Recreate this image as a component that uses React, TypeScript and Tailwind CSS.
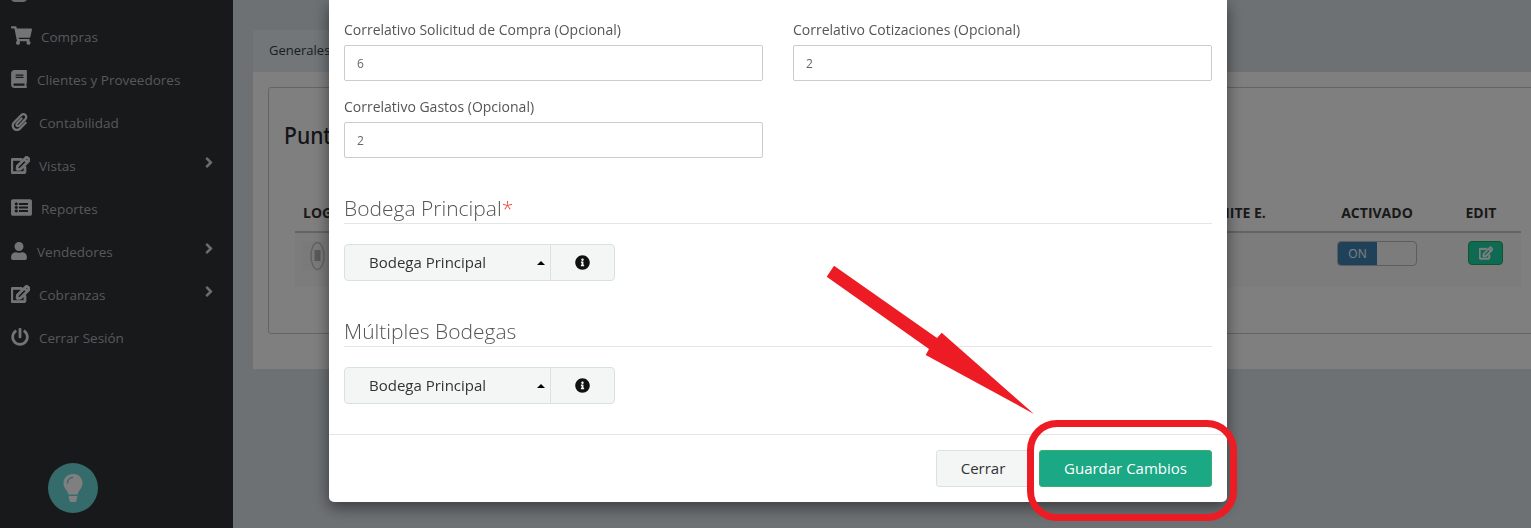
import React from "react";
import { FaShoppingCart, FaBook, FaPaperclip, FaRegEdit, FaListAlt, FaUser, FaPowerOff, FaInfoCircle, FaAngleRight } from "react-icons/fa";

const font = { fontFamily: '"Open Sans", sans-serif' };

const EditIcon = ({ className }: { className: string }) => <FaRegEdit className={className} stroke="currentColor" strokeWidth={36} />;

const items: { icon: React.ReactNode; label: string; gap: string; chevron?: boolean }[] = [
  { icon: <FaShoppingCart className="w-[21px] h-[19px]" />, label: "Compras", gap: "ml-[9px]" },
  { icon: <FaBook className="w-[16px] h-[18px]" />, label: "Clientes y Proveedores", gap: "ml-[10px]" },
  { icon: <FaPaperclip className="w-[17px] h-[18px]" />, label: "Contabilidad", gap: "ml-[11px]" },
  { icon: <EditIcon className="w-[19px] h-[18px]" />, label: "Vistas", gap: "ml-[9px]", chevron: true },
  { icon: <FaListAlt className="w-[21px] h-[19px] scale-x-110" />, label: "Reportes", gap: "ml-[9px]" },
  { icon: <FaUser className="w-[16px] h-[18px]" />, label: "Vendedores", gap: "ml-[10px]", chevron: true },
  { icon: <EditIcon className="w-[19px] h-[18px]" />, label: "Cobranzas", gap: "ml-[9px]", chevron: true },
  { icon: <FaPowerOff className="w-[18px] h-[18px]" />, label: "Cerrar Sesión", gap: "ml-[10px]" },
];

function Sidebar() {
  return (
    <aside className="w-[233px] shrink-0 bg-[#2f3236] text-[#b0b0b0] flex flex-col relative">
      <div className="-mt-[27px] h-[29px] pl-[11px] flex items-start">
        <div className="w-[16px] h-[29px] bg-[#d8d8d8] rounded-sm" />
      </div>
      <div className="pt-[13px]">
        {items.map((it) => (
          <div key={it.label} className="h-[43px] flex items-center pl-[11px] pr-[17px] text-[13.500px]">
            <span className="flex items-center -mt-[2px] text-[#e8e8e8]">{it.icon}</span>
            <span className={`${it.gap} mt-[1px]`}>{it.label}</span>
            {it.chevron && <FaAngleRight className="ml-auto w-[14px] h-[17px] -mt-[6px] text-[#d8d8d8]" />}
          </div>
        ))}
      </div>
      <div className="absolute left-[48px] top-[463px] w-[50px] h-[50px] rounded-full bg-[#6ad8d6] flex items-center justify-center">
        <svg width="22" height="30" viewBox="0 0 22 30">
          <path d="M11 1C5.500 1 1.500 5 1.500 10c0 3 1.200 5 2.800 7 1.200 1.500 1.900 3 2.100 4.500h9.200c.2-1.500.9-3 2.100-4.500 1.600-2 2.800-4 2.800-7 0-5-4-9-8.500-9z" fill="#fff" />
          <path d="M5.500 10c0-3 2.200-5.300 5-5.500" fill="none" stroke="#6ad8d6" strokeWidth="1.500" strokeLinecap="round" />
          <path d="M6.500 23h9l-1 4.500c-.3 1-1 1.500-2 1.500h-3c-1 0-1.700-.5-2-1.500z" fill="#fff" />
        </svg>
      </div>
    </aside>
  );
}

function Background() {
  return (
    <main className="flex-1 min-w-0 bg-[#dbe2e8] pl-[20px] pt-[30px] overflow-hidden">
      <div className="h-[42px] w-[120px] bg-[#e6edf2] rounded-tl flex items-center pl-[16px] text-[13px] text-[#2e3b47]">Generales</div>
      <div className="h-[297px] bg-white pl-[15px] pt-[15px]">
        <div className="h-[247px] w-[1300px] border border-[#c8c8c8] rounded-[3px] pl-[15px] pt-[31px]">
          <h2 className="text-[24px] leading-[32px] font-medium text-[#2a2a33]" style={{ fontFamily: '"Noto Sans", sans-serif', transform: "scaleX(.88)", transformOrigin: "left" }}>Punto de Venta</h2>
          <div className="w-[1226px] ml-[11px] mt-[49px]">
            <div className="h-[33px] flex items-center text-[14px] font-bold text-[#333] border-b-2 border-[#c8c8c8] pb-[7px]">
              <span className="w-[909px] pl-[8px]">LOGO</span>
              <span className="w-[108px]">LIMITE E.</span>
              <span className="w-[130px] text-center">ACTIVADO</span>
              <span className="w-[78px] text-center">EDIT</span>
            </div>
            <div className="h-[54px] bg-[#f9f9f9] flex items-start pt-[8px] pl-[8px]">
              <div className="w-[22px] h-[30px] bg-[#f4f4f4] flex items-center justify-end">
                <svg width="15" height="30" viewBox="0 0 15 30">
                  <ellipse cx="7.500" cy="15" rx="6.500" ry="13.500" fill="none" stroke="#c4c4c4" strokeWidth="1.500" />
                  <rect x="4.500" y="9" width="6" height="11" fill="#b4b4b4" />
                </svg>
              </div>
              <div className="ml-[1012px] w-[80px] h-[25px] border border-[#bbb] rounded-[4px] overflow-hidden flex text-[12px] text-white">
                <span className="w-[39px] bg-[#3f85b5] flex items-center justify-center">ON</span>
              </div>
              <button className="ml-[51px] w-[35px] h-[24px] rounded-[4px] bg-[#1ed4a8] border border-[#22a85c] flex items-center justify-center text-white">
                <EditIcon className="w-[14px] h-[14px]" />
              </button>
            </div>
          </div>
        </div>
      </div>
    </main>
  );
}

function Field({ label, value }: { label: string; value: string }) {
  return (
    <div>
      <label className="block text-[14px] leading-[20px] text-[#555] mb-[5px]">{label}</label>
      <input readOnly value={value} className="w-full h-[36px] border border-[#ccc] rounded-[2px] px-[12px] text-[12px] text-[#666] bg-white outline-none" />
    </div>
  );
}

function Section({ title, required }: { title: string; required?: boolean }) {
  return (
    <h4 className="text-[21px] leading-[24px] font-light text-[#555] border-b border-[#e5e5e5] pb-[3px]">
      {title}
      {required && <span className="text-[#e74c3c]">*</span>}
    </h4>
  );
}

function SelectGroup() {
  return (
    <div className="flex w-[271px] h-[37px] mt-[20px] text-[15px] text-[#333] bg-[#f4f5f5] border border-[#d8e2e3] rounded-[4px]">
      <div className="w-[206px] border-r border-[#d8e2e3] flex items-center pl-[24px] pr-[5px] justify-between">
        <span>Bodega Principal</span>
        <span className="w-0 h-0 border-x-[4px] border-x-transparent border-b-[4px] border-b-black" />
      </div>
      <div className="flex-1 flex items-center justify-center">
        <FaInfoCircle className="w-[15px] h-[15px] text-[#111] -mt-[1px]" />
      </div>
    </div>
  );
}

function Modal() {
  return (
    <div className="fixed left-[329px] top-0 w-[898px] h-[502px] bg-white rounded-b-[5px] shadow-[0_5px_15px_rgba(0,0,0,0.5)] flex flex-col justify-end overflow-hidden">
      <div className="px-[15px] pb-[30px]">
        <div className="grid grid-cols-2 gap-x-[30px] gap-y-[16px]">
          <Field label="Correlativo Solicitud de Compra (Opcional)" value="6" />
          <Field label="Correlativo Cotizaciones (Opcional)" value="2" />
          <Field label="Correlativo Gastos (Opcional)" value="2" />
        </div>
        <div className="mt-[38px]"><Section title="Bodega Principal" required /></div>
        <SelectGroup />
        <div className="mt-[38px]"><Section title="Múltiples Bodegas" /></div>
        <SelectGroup />
      </div>
      <div className="h-[68px] shrink-0 border-t border-[#e5e5e5] px-[15px] pt-[15px] flex justify-end gap-[5px]">
        <button className="w-[98px] h-[37px] pr-[4px] bg-[#f4f5f5] border border-[#d8e2e3] rounded-[3px] text-[15px] text-[#333]">Cerrar</button>
        <button className="w-[173px] h-[37px] bg-[#1aa885] border border-[#3fae6a] rounded-[3px] text-[15px] font-medium text-white">Guardar Cambios</button>
      </div>
    </div>
  );
}

export default function App() {
  return (
    <div className="relative w-[1531px] h-[528px] overflow-hidden flex" style={font}>
      <Sidebar />
      <Background />
      <div className="fixed inset-0 bg-black/50" />
      <Modal />
      <svg className="fixed left-0 top-0 pointer-events-none" width="1531" height="528" viewBox="0 0 1531 528">
        <polygon points="826.700,276.700 834,265.700 937,338 941.700,332.700 1034,414 925.700,355 929,349" fill="#ed1c24" />
      </svg>
      <div className="fixed left-[1027px] top-[420px] w-[210px] h-[101px] border-[7px] border-[#ed1c24] rounded-[30px] pointer-events-none" />
    </div>
  );
}
